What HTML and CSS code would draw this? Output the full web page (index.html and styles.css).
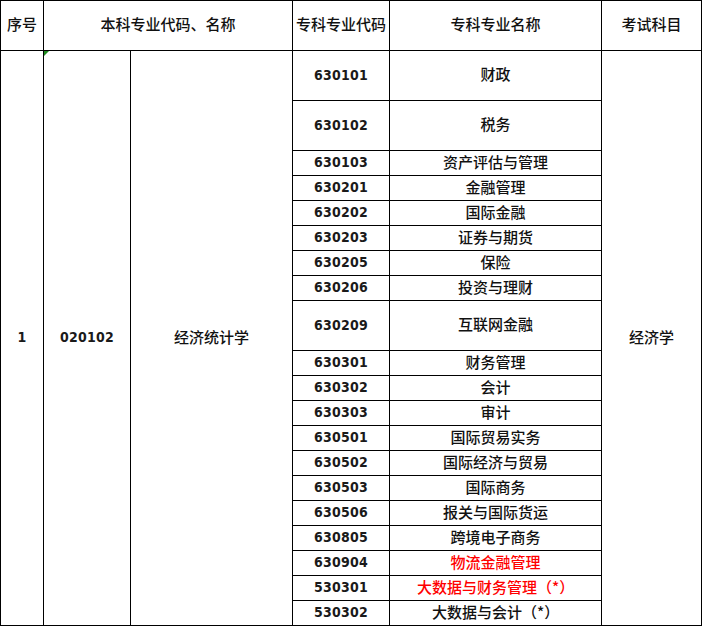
FILE: index.html
```html
<!DOCTYPE html>
<html lang="zh">
<head>
<meta charset="utf-8">
<link rel="stylesheet" href="styles.css">
</head>
<body>
<div class="wrap">
<table class="grid">
<colgroup>
<col class="c1"><col class="c2"><col class="c3"><col class="c4"><col class="c5"><col class="c6">
</colgroup>
<thead>
<tr class="head"><th>序号</th><th colspan="2">本科专业代码、名称</th><th>专科专业代码</th><th>专科专业名称</th><th>考试科目</th></tr>
</thead>
<tbody>
<tr class="tall"><td rowspan="20" class="num">1</td><td rowspan="20" class="num">020102</td><td rowspan="20">经济统计学</td><td class="num">630101</td><td>财政</td><td rowspan="20">经济学</td></tr>
<tr class="tall"><td class="num">630102</td><td>税务</td></tr>
<tr><td class="num">630103</td><td>资产评估与管理</td></tr>
<tr><td class="num">630201</td><td>金融管理</td></tr>
<tr><td class="num">630202</td><td>国际金融</td></tr>
<tr><td class="num">630203</td><td>证券与期货</td></tr>
<tr><td class="num">630205</td><td>保险</td></tr>
<tr><td class="num">630206</td><td>投资与理财</td></tr>
<tr class="tall"><td class="num">630209</td><td>互联网金融</td></tr>
<tr><td class="num">630301</td><td>财务管理</td></tr>
<tr><td class="num">630302</td><td>会计</td></tr>
<tr><td class="num">630303</td><td>审计</td></tr>
<tr><td class="num">630501</td><td>国际贸易实务</td></tr>
<tr><td class="num">630502</td><td>国际经济与贸易</td></tr>
<tr><td class="num">630503</td><td>国际商务</td></tr>
<tr><td class="num">630506</td><td>报关与国际货运</td></tr>
<tr><td class="num">630805</td><td>跨境电子商务</td></tr>
<tr><td class="num">630904</td><td class="red">物流金融管理</td></tr>
<tr><td class="num">530301</td><td class="red">大数据与财务管理（*）</td></tr>
<tr><td class="num">530302</td><td>大数据与会计（*）</td></tr>
</tbody>
</table>
<span class="marker"></span>
</div>
</body>
</html>
```
FILE: styles.css
```css
html, body {
  margin: 0;
  padding: 0;
  background: #ffffff;
}
.wrap {
  position: relative;
  width: 702px;
}
.grid {
  border-collapse: collapse;
  table-layout: fixed;
  width: 701px;
  font-family: "Noto Sans CJK SC", "DejaVu Sans", sans-serif;
  font-size: 15px;
  font-weight: 500;
  color: #111111;
}
.c1 { width: 43px; }
.c2 { width: 87px; }
.c3 { width: 162px; }
.c4 { width: 97px; }
.c5 { width: 212px; }
.c6 { width: 100px; }
.grid th, .grid td {
  border: 1px solid #000000;
  padding: 0 0 4px 0;
  text-align: center;
  vertical-align: middle;
  line-height: 17px;
  font-weight: 500;
}
.grid tr { height: 25px; }
.grid tr.head { height: 50px; }
.grid tr.tall { height: 50px; }
.grid td.num {
  font-family: "DejaVu Sans Condensed", "DejaVu Sans", sans-serif;
  font-stretch: condensed;
  font-weight: bold;
  font-size: 14px;
  letter-spacing: 0.2px;
  padding-bottom: 1px;
  color: #1a1a1a;
}
.grid td.red { color: #ff0000; }
.marker {
  position: absolute;
  left: 44px;
  top: 51px;
  width: 0;
  height: 0;
  border-top: 5px solid #1e8a1e;
  border-right: 5px solid transparent;
}
```
